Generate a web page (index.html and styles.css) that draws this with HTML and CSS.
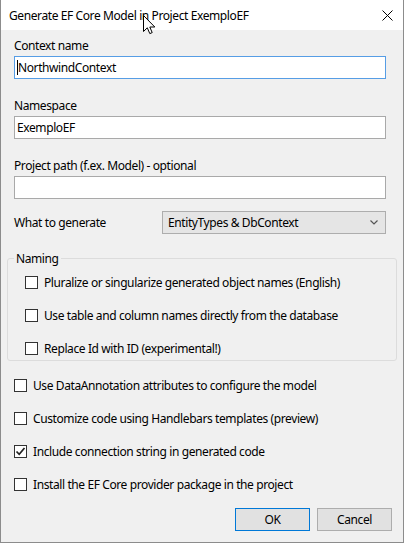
FILE: index.html
```html
<!DOCTYPE html>
<html>
<head>
<meta charset="utf-8">
<link rel="stylesheet" href="styles.css">
</head>
<body>
<div class="window">
  <div class="titlebar">
    <span class="title">Generate EF Core Model in Project ExemploEF</span>
    <svg class="close" width="11" height="11" viewBox="0 0 11 11"><path d="M0.5 0.5 L10.5 10.5 M10.5 0.5 L0.5 10.5" stroke="#000" stroke-width="1" fill="none"/></svg>
  </div>
  <div class="content">
    <div class="field first">
      <div class="label">Context name</div>
      <div class="textbox focused"><span class="caret"></span>NorthwindContext</div>
    </div>
    <div class="field">
      <div class="label">Namespace</div>
      <div class="textbox">ExemploEF</div>
    </div>
    <div class="field">
      <div class="label">Project path (f.ex. Model) - optional</div>
      <div class="textbox"></div>
    </div>
    <div class="gen-row">
      <span class="gen-label">What to generate</span>
      <div class="select">
        <span>EntityTypes &amp; DbContext</span>
        <svg class="chevron" width="8" height="5" viewBox="0 0 8 5"><path d="M0.5 0.5 L4 4 L7.5 0.5" stroke="#555" stroke-width="1.2" fill="none"/></svg>
      </div>
    </div>
    <fieldset class="group">
      <legend>Naming</legend>
      <div class="check-row"><span class="box"></span><span>Pluralize or singularize generated object names (English)</span></div>
      <div class="check-row"><span class="box"></span><span>Use table and column names directly from the database</span></div>
      <div class="check-row"><span class="box"></span><span>Replace Id with ID (experimental!)</span></div>
    </fieldset>
    <div class="options">
      <div class="check-row"><span class="box"></span><span>Use DataAnnotation attributes to configure the model</span></div>
      <div class="check-row"><span class="box"></span><span>Customize code using Handlebars templates (preview)</span></div>
      <div class="check-row"><span class="box checked"><svg width="11" height="11" viewBox="0 0 11 11"><path d="M1.5 5.5 L4.2 8.3 L9.5 2" stroke="#222" stroke-width="1.7" fill="none"/></svg></span><span>Include connection string in generated code</span></div>
      <div class="check-row"><span class="box"></span><span>Install the EF Core provider package in the project</span></div>
    </div>
    <div class="buttons">
      <button class="btn default">OK</button>
      <button class="btn">Cancel</button>
    </div>
  </div>
  <svg class="cursor" width="13" height="20" viewBox="0 0 13 20"><path d="M0.5 0.5 L0.5 16.5 L4.3 12.8 L6.8 18.6 L9.2 17.6 L6.8 12 L11.8 12 Z" fill="#fff" stroke="#000" stroke-width="1" stroke-linejoin="miter"/></svg>
</div>
</body>
</html>
```

FILE: styles.css
```css
* { box-sizing: border-box; }
html, body { margin: 0; padding: 0; }
body {
  font-family: "Noto Sans", "Open Sans", sans-serif;
  font-size: 12px;
  letter-spacing: -0.4px;
  color: #000;
  background: #f0f0f0;
}
.window {
  position: relative;
  width: 404px;
  height: 543px;
  background: #f0f0f0;
  border: 1px solid #8c8c8c;
  border-top: none;
  overflow: hidden;
}
.titlebar {
  height: 30px;
  background: #fff;
  display: flex;
  align-items: center;
  justify-content: space-between;
  padding: 0 9px 0 8px;
}
.title { line-height: 15px; }
.close { display: block; margin-right: 1px; }
.content {
  padding: 8px 17px 0 13px;
}
.field { margin-top: 19px; }
.field.first { margin-top: 0; }
.label { line-height: 15px; height: 15px; }
.textbox {
  margin-top: 3px;
  height: 23px;
  border: 1px solid #a9a9a9;
  background: #fff;
  padding: 0 2px;
  line-height: 21px;
  display: flex;
  align-items: center;
  white-space: nowrap;
}
.textbox.focused { border-color: #569de5; }
.caret {
  display: inline-block;
  width: 1px;
  height: 15px;
  background: #000;
}
.gen-row {
  margin-top: 12px;
  display: flex;
  align-items: center;
}
.gen-label { width: 148px; line-height: 15px; }
.select {
  flex: 1;
  height: 23px;
  border: 1px solid #adadad;
  background: #e5e5e5;
  display: flex;
  align-items: center;
  justify-content: space-between;
  padding: 0 7px 0 5px;
}
.chevron { display: block; }
.group {
  margin: 17px -11px 0 -7px;
  padding: 8px 10px 3px 17px;
  border: 1px solid #dcdcdc;
  border-radius: 3px;
  min-width: 0;
}
.group legend {
  margin-left: -11px;
  padding: 0 2px;
  line-height: 15px;
}
.check-row {
  display: flex;
  align-items: center;
  height: 17px;
  line-height: 15px;
  white-space: nowrap;
}
.check-row + .check-row { margin-top: 16px; }
.box {
  width: 13px;
  height: 13px;
  border: 1px solid #333;
  background: #fff;
  margin-right: 6px;
  flex: none;
  display: flex;
  align-items: center;
  justify-content: center;
}
.options { margin-top: 16px; }
.buttons {
  margin: 15px -6px 0 0;
  display: flex;
  justify-content: flex-end;
  gap: 7px;
}
.btn {
  width: 75px;
  height: 23px;
  font: inherit;
  letter-spacing: inherit;
  color: #000;
  background: #e1e1e1;
  border: 1px solid #adadad;
  padding: 0;
  line-height: 21px;
}
.btn.default { border-color: #0078d7; }
.cursor {
  position: absolute;
  left: 142px;
  top: 15px;
}
```
